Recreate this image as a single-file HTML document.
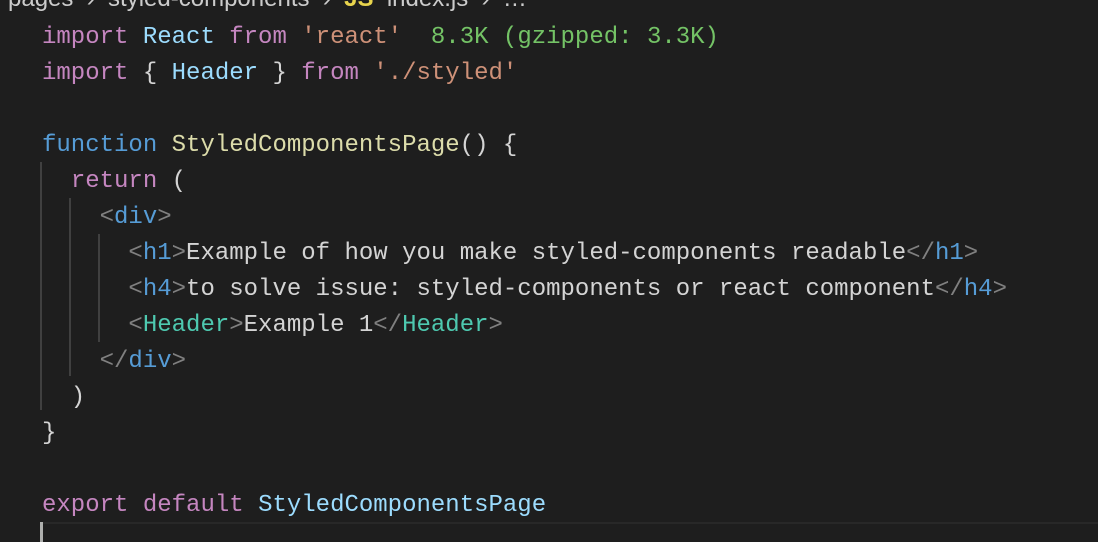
<!DOCTYPE html>
<html><head><meta charset="utf-8"><style>
html,body{margin:0;padding:0;background:#1e1e1e;width:1098px;height:542px;overflow:hidden;position:relative}
.bc{position:absolute;left:8px;top:-15px;font:24px "Liberation Sans",sans-serif;color:#cccccc;white-space:pre}
.code{position:absolute;left:42px;top:20px;font:24px/36px "Liberation Mono",monospace;color:#d4d4d4;white-space:pre}
.k{color:#c586c0}.v{color:#9cdcfe}.s{color:#ce9178}.g{color:#74c366}.f{color:#569cd6}.fn{color:#dcdcaa}
.t{color:#808080}.tg{color:#569cd6}.c{color:#4ec9b0}
.guide{position:absolute;width:2px;background:#404040}
.cur{position:absolute;left:41px;top:522px;width:1057px;height:20px;border-top:2px solid #282828}
.caret{position:absolute;left:40px;top:522px;width:3px;height:20px;background:#aeafad}
</style></head><body>
<div class="bc">pages  ›  styled-components  ›  <span style="color:#e8d44d;font-weight:bold">JS</span>  index.js  ›  …</div>
<div class="guide" style="left:40px;top:162px;height:248px"></div>
<div class="guide" style="left:69px;top:198px;height:178px"></div>
<div class="guide" style="left:98px;top:234px;height:108px"></div>
<div class="cur"></div><div class="caret"></div>
<div class="code"><span class="k">import</span> <span class="v">React</span> <span class="k">from</span> <span class="s">'react'</span>  <span class="g">8.3K (gzipped: 3.3K)</span>
<span class="k">import</span> { <span class="v">Header</span> } <span class="k">from</span> <span class="s">'./styled'</span>

<span class="f">function</span> <span class="fn">StyledComponentsPage</span>() {
  <span class="k">return</span> (
    <span class="t">&lt;</span><span class="tg">div</span><span class="t">&gt;</span>
      <span class="t">&lt;</span><span class="tg">h1</span><span class="t">&gt;</span>Example of how you make styled-components readable<span class="t">&lt;/</span><span class="tg">h1</span><span class="t">&gt;</span>
      <span class="t">&lt;</span><span class="tg">h4</span><span class="t">&gt;</span>to solve issue: styled-components or react component<span class="t">&lt;/</span><span class="tg">h4</span><span class="t">&gt;</span>
      <span class="t">&lt;</span><span class="c">Header</span><span class="t">&gt;</span>Example 1<span class="t">&lt;/</span><span class="c">Header</span><span class="t">&gt;</span>
    <span class="t">&lt;/</span><span class="tg">div</span><span class="t">&gt;</span>
  )
}

<span class="k">export</span> <span class="k">default</span> <span class="v">StyledComponentsPage</span>
</div>
</body></html>
